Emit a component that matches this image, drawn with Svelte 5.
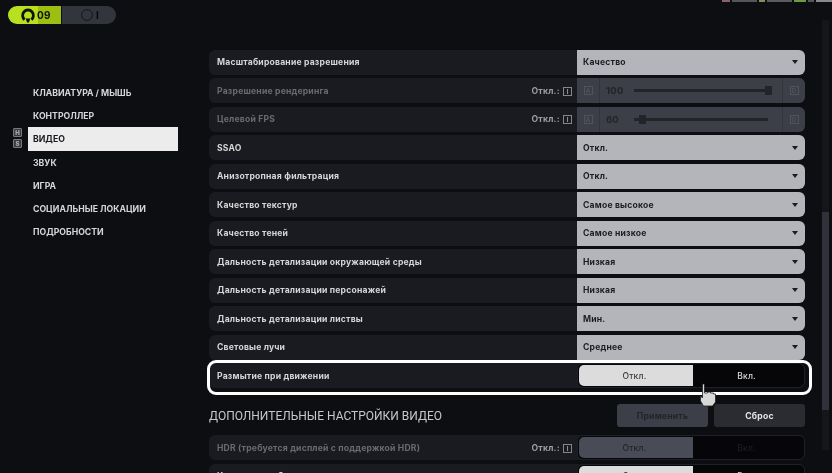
<script>
    const nav = ["КЛАВИАТУРА / МЫШЬ", "КОНТРОЛЛЕР", "ВИДЕО", "ЗВУК", "ИГРА", "СОЦИАЛЬНЫЕ ЛОКАЦИИ", "ПОДРОБНОСТИ"];

    const rows = [
        { label: "Масштабирование разрешения", value: "Качество" },
        { label: "Разрешение рендеринга", slider: 100, pos: 100 },
        { label: "Целевой FPS", slider: 60, pos: 6 },
        { label: "SSAO", value: "Откл." },
        { label: "Анизотропная фильтрация", value: "Откл." },
        { label: "Качество текстур", value: "Самое высокое" },
        { label: "Качество теней", value: "Самое низкое" },
        { label: "Дальность детализации окружающей среды", value: "Низкая" },
        { label: "Дальность детализации персонажей", value: "Низкая" },
        { label: "Дальность детализации листвы", value: "Мин." },
        { label: "Световые лучи", value: "Среднее" }
    ];
</script>

<div class="page">
    <header class="top">
        <div class="level">
            <svg width="14" height="15" viewBox="0 0 14 15" fill="none">
                <path d="M3.6 11.6A5.4 5.4 0 1 1 10.4 11.6" stroke="#10120c" stroke-width="2.8"/>
                <path d="M4.6 10.5h4.8L7.9 14.6H6.1z" fill="#10120c"/>
            </svg>
            <span>09</span>
        </div>
        <div class="coins">
            <svg width="12" height="12" viewBox="0 0 12 12" fill="none">
                <circle cx="6" cy="6" r="5.4" stroke="#15161a" stroke-width="1"/>
            </svg>
            <span>I</span>
        </div>
    </header>

    <div class="content">
        <nav>
            <div class="keys"><b>H</b><b>S</b></div>
            <ul>
                {#each nav as item}
                    <li class:active={item === "ВИДЕО"}>{item}</li>
                {/each}
            </ul>
        </nav>

        <main>
            {#each rows as row}
                <div class="row">
                    <span class="label" class:dim={row.slider}>{row.label}</span>
                    {#if row.slider}
                        <span class="off">Откл.: <i>I</i></span>
                        <div class="control slider">
                            <span class="key"><i>A</i></span>
                            <span class="num">{row.slider}</span>
                            <span class="track"><span class="thumb" style="left: {row.pos}%"></span></span>
                            <span class="key right"><i>D</i></span>
                        </div>
                    {:else}
                        <div class="control select">
                            <span>{row.value}</span>
                            <span class="arrow"></span>
                        </div>
                    {/if}
                </div>
            {/each}

            <div class="row focused">
                <span class="label">Размытие при движении</span>
                <div class="control toggle">
                    <span class="on">Откл.</span>
                    <span>Вкл.</span>
                </div>
                <svg class="hand" width="18" height="26" viewBox="0 0 18 26">
                    <path d="M3.5 2v14l-2-2v5l3 5h9l3-4v-8h-2v-1h-3v-1h-3V11H5.5V2z" fill="#d8d8d8" stroke="#222" stroke-width="0.8"/>
                </svg>
            </div>

            <div class="section">
                <h2>ДОПОЛНИТЕЛЬНЫЕ НАСТРОЙКИ ВИДЕО</h2>
                <div class="buttons">
                    <button class="apply">Применить</button>
                    <button class="reset">Сброс</button>
                </div>
            </div>

            <div class="row">
                <span class="label dim">HDR (требуется дисплей с поддержкой HDR)</span>
                <span class="off">Откл.: <i>I</i></span>
                <div class="control toggle disabled">
                    <span class="on">Откл.</span>
                    <span>Вкл.</span>
                </div>
            </div>
            <div class="row">
                <span class="label">Качество изображения</span>
                <div class="control toggle">
                    <span class="on">Откл.</span>
                    <span>Вкл.</span>
                </div>
            </div>
        </main>

        <div class="scroll"><span></span></div>
    </div>

    <div class="stats">
        <span class="s1"></span><span class="s2"></span><span class="s3"></span><span class="s4"></span><span class="s5"></span><span class="s6"></span><span class="s7"></span>
    </div>
</div>

<style>
    :global(body) {
        margin: 0;
        background: #0d0e11;
    }

    .page {
        position: relative;
        width: 832px;
        height: 473px;
        overflow: hidden;
        background: #0d0e11;
        font-family: Inter, "Liberation Sans", sans-serif;
        font-weight: 700;
        font-size: 8.6px;
        letter-spacing: 0.2px;
        color: #d6d6d8;
        filter: blur(0.4px);
    }

    .top {
        display: flex;
        gap: 1px;
        padding: 6px 0 0 8px;
        height: 18px;
    }

    .level {
        display: flex;
        align-items: center;
        gap: 2px;
        width: 53px;
        padding-left: 13px;
        box-sizing: border-box;
        border-radius: 9px 0 0 9px;
        background: linear-gradient(90deg, #b9e01e 0 56%, #9cbf12 56%);
        color: #10120c;
        font-size: 10px;
    }

    .coins {
        display: flex;
        align-items: center;
        gap: 3px;
        width: 54px;
        padding-left: 19px;
        box-sizing: border-box;
        border-radius: 0 9px 9px 0;
        background: #33353d;
        color: #08090b;
        font-size: 10px;
    }

    .content {
        display: flex;
        padding-top: 25.5px;
    }

    nav {
        position: relative;
        flex: none;
        width: 209px;
        padding-top: 31.5px;
        box-sizing: border-box;
    }

    ul {
        list-style: none;
        margin: 0 0 0 28px;
        padding: 0;
        width: 150px;
    }

    li {
        display: flex;
        align-items: center;
        height: 23px;
        padding-left: 5px;
        font-size: 8.7px;
        letter-spacing: 0;
    }

    li.active {
        background: #ececec;
        color: #1a1b1f;
        height: 24px;
    }

    .keys {
        position: absolute;
        left: 13px;
        top: 78px;
        display: flex;
        flex-direction: column;
        gap: 2px;
    }

    .keys b {
        width: 9px;
        height: 9px;
        border-radius: 1px;
        background: #3a3b40;
        border: 0.5px solid #77787c;
        box-sizing: border-box;
        font-size: 6px;
        line-height: 8px;
        text-align: center;
        color: #a5a6aa;
        letter-spacing: 0;
    }

    main {
        flex: none;
        width: 596px;
        display: flex;
        flex-direction: column;
        gap: 3.5px;
    }

    .row {
        position: relative;
        flex: none;
        display: flex;
        align-items: center;
        height: 25px;
        padding-left: 8px;
        box-sizing: border-box;
        border-radius: 6px;
        background: #1a1b20;
    }

    .label {
        flex: 1;
    }

    .label.dim {
        color: #6a6b70;
    }

    .off {
        margin-right: 5px;
        color: #9d9ea2;
    }

    .off i {
        display: inline-block;
        width: 9px;
        height: 9px;
        line-height: 8px;
        margin-left: 1px;
        border: 1px solid #85868a;
        box-sizing: border-box;
        font-style: normal;
        font-size: 6px;
        text-align: center;
        letter-spacing: 0;
    }

    .control {
        flex: none;
        width: 228px;
        height: 25px;
        display: flex;
        align-items: center;
        box-sizing: border-box;
        border-radius: 0 6px 6px 0;
    }

    .select {
        justify-content: space-between;
        padding: 0 7px 0 6px;
        background: #b4b5bb;
        color: #1b1c20;
    }

    .arrow {
        width: 0;
        height: 0;
        border-left: 3.5px solid transparent;
        border-right: 3.5px solid transparent;
        border-top: 4px solid #1b1c20;
    }

    .slider {
        background: #3c3e48;
        color: #23242a;
        font-size: 9.5px;
    }

    .key {
        display: flex;
        align-items: center;
        justify-content: center;
        flex: none;
        width: 23px;
        height: 25px;
        border-right: 1px solid #33343d;
        box-sizing: border-box;
    }

    .key.right {
        border-right: 0;
        border-left: 1px solid #33343d;
    }

    .key i {
        width: 9px;
        height: 9px;
        line-height: 8px;
        border: 1px solid #50525c;
        box-sizing: border-box;
        font-style: normal;
        font-size: 6px;
        text-align: center;
        letter-spacing: 0;
        color: #50525c;
    }

    .num {
        flex: none;
        width: 34px;
        padding-left: 6px;
        box-sizing: border-box;
    }

    .track {
        position: relative;
        flex: 1;
        height: 3px;
        margin-right: 14px;
        background: #23242a;
    }

    .thumb {
        position: absolute;
        top: -3px;
        width: 7px;
        height: 9px;
        margin-left: -3px;
        background: #23242a;
    }

    .toggle {
        padding: 1px;
        border-radius: 6px;
        background: #060608;
        border: 1px solid #1f2025;
        font-weight: 500;
        font-size: 8.5px;
        color: #d8d8da;
    }

    .toggle span {
        flex: 1;
        height: 100%;
        display: flex;
        align-items: center;
        justify-content: center;
        padding-right: 3px;
        box-sizing: border-box;
    }

    .toggle .on {
        flex: none;
        width: 114px;
        border-radius: 5px 0 0 5px;
        background: #dcdcdc;
        color: #3a3b40;
    }

    .toggle.disabled {
        color: #1c1d21;
    }

    .toggle.disabled .on {
        background: #494b57;
        color: #23242a;
    }

    /* white frame sits a bit further out on the right and bottom */
    .focused::after {
        content: "";
        position: absolute;
        inset: -3px -7px -7px -2px;
        border: 3px solid #fff;
        border-radius: 9px;
        pointer-events: none;
    }

    .hand {
        position: absolute;
        left: 490px;
        top: 19px;
        z-index: 1;
    }

    .section {
        flex: none;
        display: flex;
        align-items: center;
        justify-content: space-between;
        height: 23px;
        margin: 12.5px 0 4.5px;
    }

    h2 {
        margin: 0;
        font-family: Roboto, "Liberation Sans", sans-serif;
        font-size: 12px;
        font-weight: 400;
        letter-spacing: 0;
        color: #c8c8ca;
    }

    .buttons {
        display: flex;
        gap: 6px;
    }

    button {
        width: 91px;
        height: 23px;
        padding: 0;
        border: 0;
        border-radius: 3px;
        font: inherit;
        letter-spacing: inherit;
    }

    .apply {
        background: #3c3e48;
        color: #23242a;
    }

    .reset {
        background: #2b2c31;
        color: #e6e6e8;
    }

    .scroll {
        flex: none;
        width: 7px;
        height: 430px;
        margin-left: 17px;
        margin-top: -30px;
        background: #15161a;
    }

    .scroll span {
        display: block;
        height: 198px;
        margin-top: 192px;
        background: #30313a;
    }

    .scroll::before {
        content: "";
        display: block;
        height: 0.02px;
    }

    .stats {
        position: absolute;
        top: 0;
        left: 722px;
        display: flex;
        gap: 2px;
    }

    .stats span {
        height: 2px;
    }

    .s1 { width: 8px; background: #8a5f66; }
    .s2 { width: 25px; background: #55555a; }
    .s3 { width: 6px; background: #8a8a60; }
    .s4 { width: 25px; background: #5c5c60; }
    .s5 { width: 12px; background: #6c9a3c; }
    .s6 { width: 6px; background: #55555a; }
    .s7 { width: 18px; background: #88888a; }
</style>
